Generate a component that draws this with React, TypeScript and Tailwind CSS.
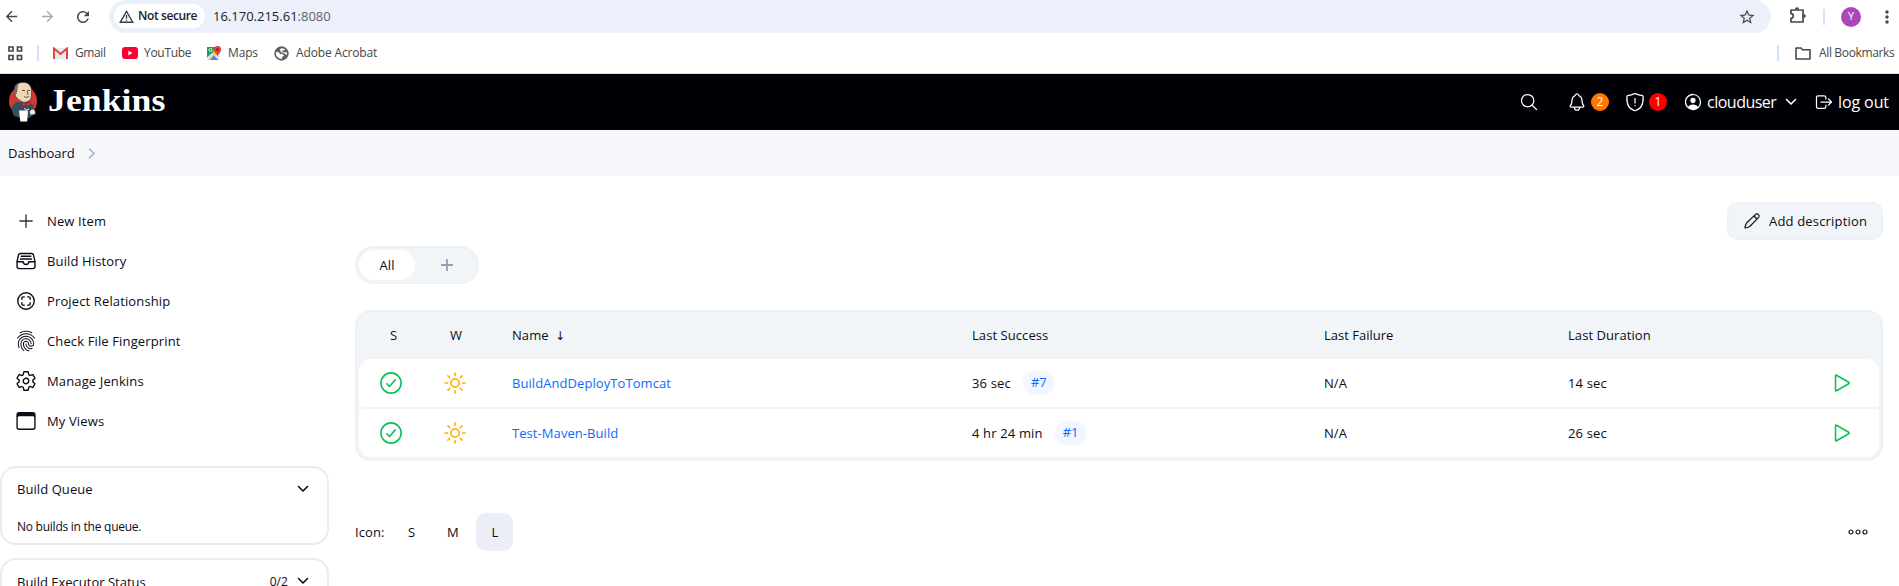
import React from "react";
import { IoFileTrayFullOutline, IoScanCircleOutline, IoFingerPrintOutline, IoSettingsOutline, IoBrowsersOutline, IoSearchOutline, IoNotificationsOutline, IoPersonCircleOutline, IoLogOutOutline, IoAdd } from "react-icons/io5";
import { MdArrowBack, MdArrowForward, MdRefresh, MdStarBorder, MdMoreVert } from "react-icons/md";

function Jenkins() {
  return (
    <svg width="30" height="42" viewBox="0 0 30 42">
      <ellipse cx="15" cy="20" rx="14" ry="15" fill="#d33833" />
      <path d="M7 22 3 27l3 8 7 2h8l6-4-2-9-5-3H9z" fill="#335061" />
      <path d="M7 13C6 5 10 1 15 1.500c6-.5 9 4 8.500 10 0 6-1 8-4 9-3 1.500-5 1-7.500-1-3-2-4.500-3-5-6.500z" fill="#f0d6b7" stroke="#4a403a" strokeWidth=".8" />
      <path d="M6.500 13C5.500 6 7 3 11 2c-1.500 3-1.500 5-1.500 7l-1 4z" fill="#6d6b6d" />
      <path d="M14 9.500h3m2.500 0H22M16 15.500c2 1.500 4 1 5-.5M19 10l1 3-1 .5" stroke="#4a403a" strokeWidth=".9" fill="none" />
      <path d="M14 21l4 2 4-2.500v5l-4-1.500-3.500 2z" fill="#d33833" stroke="#801c1c" strokeWidth=".5" />
      <path d="M16 27l2 2 3-1" stroke="#dfe6ea" strokeWidth="1" fill="none" />
      <path d="M11 29.500h9l-.8 11h-6.900z" fill="#fff" />
      <path d="M21.500 31c1-3 4-4 5.500-1l.5 3-5 1z" fill="#f5e9db" stroke="#4a403a" strokeWidth=".4" />
    </svg>
  );
}

function Gmail() {
  return (
    <svg width="15" height="12" viewBox="0 0 15 12">
      <path d="M1 1h13v11H1z" fill="#e8eaed" />
      <path d="M1 12V1.500L7.500 7 14 1.500V12" fill="none" stroke="#e0463b" strokeWidth="2" />
    </svg>
  );
}

function MapsIcon() {
  return (
    <svg width="15" height="15" viewBox="0 0 15 15">
      <path d="M0 1h13v13H0z" fill="#e5e7e8" />
      <path d="M0 1h9L5 8 0 12z" fill="#1f9d58" />
      <path d="M0 14 10 3l3 1-9 10z" fill="#fbc934" />
      <path d="M3 14l4-4.500L11.500 14z" fill="#4286f5" />
      <path d="M0 11.500 5 7l1.500 1.500L1 14H0z" fill="#d6e5fb" />
      <circle cx="3.500" cy="4" r="1.500" fill="none" stroke="#fff" strokeWidth=".8" />
      <path d="M10.500 0a3.700 3.700 0 0 1 3.700 3.700c0 2.500-2.700 3.800-3.700 6.800-1-3-3.700-4.300-3.700-6.800A3.700 3.700 0 0 1 10.500 0z" fill="#e2453a" />
      <circle cx="10.500" cy="3.600" r="1.300" fill="#8c2119" />
    </svg>
  );
}

function Globe() {
  return (
    <svg width="15" height="15" viewBox="0 0 15 15">
      <circle cx="7.500" cy="7.500" r="7.200" fill="#5f6368" />
      <path d="M2 6h2.500l1.500 2 3 .3 1 1.500-2 1.200v2C4.500 13 2.200 10.500 1.900 7.800zM7 2.200l3 .5 1.500 1.300-2.500.3-1.200 1.200 1.700.8 3.500.2c.2.800.1 1.700-.1 2.500L10.500 7.600 7 6.300 6 4z" fill="#fff" />
    </svg>
  );
}

function Puzzle() {
  return (
    <svg width="18" height="18" viewBox="0 0 18 18" fill="none" stroke="#474747" strokeWidth="1.700" strokeLinejoin="round">
      <path d="M2 4h12v12H2v-3.700a2.300 2.300 0 0 0 0-4.600z" />
      <path d="M6 3.500a2 2.300 0 0 1 4 0zM14.500 8a2.300 2 0 0 1 0 4z" fill="#474747" stroke="none" />
    </svg>
  );
}

function Folder() {
  return (
    <svg width="16" height="13" viewBox="0 0 16 13" fill="none" stroke="#474747" strokeWidth="1.600" strokeLinejoin="round">
      <path d="M1 1h5l1.600 1.800H15V12H1z" />
    </svg>
  );
}

function Shield() {
  return (
    <svg width="20" height="20" viewBox="0 0 512 512" fill="none" stroke="currentColor" strokeWidth="32" strokeLinecap="round" strokeLinejoin="round">
      <path d="M463 113c0-9-6-17-15-18-94-16-121-25-183-52-6-3-12-3-18 0-62 27-89 36-183 52-9 1-15 9-15 18-6 102 9 190 46 255 39 69 94 93 161 112 67-19 122-43 161-112 37-65 52-153 46-255z" />
      <path d="M256 160v120M256 345v4" />
    </svg>
  );
}

function Sun() {
  return (
    <svg width="22" height="22" viewBox="0 0 22 22" fill="none" stroke="#ffb21a" strokeWidth="1.700" strokeLinecap="round">
      <circle cx="11" cy="11" r="4.200" />
      <path d="M11 1v2.500M11 18.500V21M1 11h2.500M18.500 11H21M3.930 3.930l1.770 1.770M16.300 16.300l1.770 1.770M3.930 18.070l1.770-1.770M16.300 5.700l1.770-1.770" />
    </svg>
  );
}

function Check() {
  return (
    <svg width="22" height="22" viewBox="0 0 22 22" fill="none" stroke="#0cc155" strokeWidth="1.600" strokeLinecap="round" strokeLinejoin="round">
      <circle cx="11" cy="11" r="10.100" />
      <path d="M6.800 11.800l2.600 2.700 5.800-6.600" />
    </svg>
  );
}

function Play() {
  return (
    <svg width="17" height="18" viewBox="0 0 17 18" className="ml-[35px]" fill="none" stroke="#0cc155" strokeWidth="1.600" strokeLinejoin="round">
      <path d="M1.500 1.900v14.200c0 .6.500 1 1 .7l12.200-7c.6-.3.600-1.100 0-1.500L2.500 1.200c-.5-.3-1 .1-1 .7z" />
    </svg>
  );
}

function Chevron({ className = "" }: { className?: string }) {
  return (
    <svg width="12" height="8" viewBox="0 0 12 8" className={className} fill="none" stroke="currentColor" strokeWidth="1.600" strokeLinecap="round" strokeLinejoin="round">
      <path d="M1.500 1.500 6 6l4.500-4.500" />
    </svg>
  );
}

function Pencil() {
  return (
    <svg width="16" height="16" viewBox="0 0 16 16" fill="none" stroke="#14141f" strokeWidth="1.200" strokeLinejoin="round">
      <path d="M1 15c0-2 .5-3.800 1.800-5.200L11.300 1.600a1.900 1.900 0 0 1 3.100 0 1.900 1.900 0 0 1 0 3L6.200 13C4.800 14.300 3 15 1 15z M10.600 2.500c0 1.700 1.100 2.900 2.900 2.900" />
    </svg>
  );
}

function Warning() {
  return (
    <svg width="15" height="13" viewBox="0 0 15 13" fill="none" stroke="#3c4043" strokeWidth="1.400">
      <path d="M1.300 12.200 7.500 1.400l6.200 10.800z M7.500 5v3.700M7.500 9.700v1.300" />
    </svg>
  );
}

const nav = [
  { label: "New Item", icon: <IoAdd size={22} className="text-[#333340]" /> },
  { label: "Build History", icon: <IoFileTrayFullOutline size={22} /> },
  { label: "Project Relationship", icon: <IoScanCircleOutline size={22} /> },
  { label: "Check File Fingerprint", icon: <IoFingerPrintOutline size={22} /> },
  { label: "Manage Jenkins", icon: <IoSettingsOutline size={22} /> },
  { label: "My Views", icon: <IoBrowsersOutline size={22} /> },
];

const jobs = [
  { name: "BuildAndDeployToTomcat", ago: "36 sec", build: "#7", dur: "14 sec", r: "rounded-t-[12px] rounded-b-[4px]" },
  { name: "Test-Maven-Build", ago: "4 hr 24 min", build: "#1", dur: "26 sec", r: "rounded-t-[4px] rounded-b-[12px]" },
];

const cols = "grid grid-cols-[64px_89px_460px_352px_244px_1fr_80px] items-center";

export default function App() {
  return (
    <div className="h-[586px] w-[1899px] overflow-hidden bg-white font-['Open_Sans','Noto_Sans',sans-serif] text-[13px] tracking-[0.07px] text-[#0c0c16]">
      <div className="flex h-[33px] items-center">
        <div className="flex w-[109px] items-center pl-[3px] text-[#474747]">
          <MdArrowBack size={17} className="mr-[19px]" />
          <MdArrowForward size={17} className="mr-[18px] text-[#a8a8a8]" />
          <MdRefresh size={18} />
        </div>
        <div className="flex h-[33px] w-[1662px] items-center rounded-full bg-[#ecf0fa] pl-[5px]">
          <div className="-mt-px flex h-6 w-[91px] items-center gap-[4px] rounded-full bg-white pl-[5px]">
            <Warning />
            <span className="whitespace-nowrap text-[12px] font-semibold tracking-[-0.4px] text-[#202124]">Not secure</span>
          </div>
          <span className="ml-[8px] text-[13px] tracking-[0px] text-[#202124]">16.170.215.61<span className="text-[#5f6368]">:8080</span></span>
          <MdStarBorder size={18} className="mr-[15px] ml-auto text-[#474747]" />
        </div>
        <div className="-mt-[3px] ml-[18px]"><Puzzle /></div>
        <div className="ml-[16px] h-4 w-[2px] bg-[#d3e3fd]" />
        <div className="ml-[16px] flex size-5 items-center justify-center rounded-full bg-[#ab47bc] text-[11px] text-white">Y</div>
        <MdMoreVert size={20} className="ml-[16px] shrink-0 text-[#474747]" />
      </div>
      <div className="flex h-[41px] items-center border-b border-[#dcdcdc] text-[12px] tracking-[-0.15px] text-[#474747]">
        <svg width="15" height="15" viewBox="0 0 15 15" className="ml-[8px]" fill="none" stroke="#474747" strokeWidth="1.700"><path d="M1 1h4v4H1zM9.500 1h4v4h-4zM1 9.500h4v4H1zM9.500 9.500h4v4h-4z" /></svg>
        <div className="ml-[14px] h-4 w-[2px] bg-[#d3e3fd]" />
        <div className="ml-[14px] flex w-[69px] items-center gap-[7px]"><Gmail /><span className="tracking-[-0.4px]">Gmail</span></div>
        <div className="flex w-[85px] items-center gap-[6px]">
          <svg width="16" height="12" viewBox="0 0 16 12"><rect width="16" height="12" rx="3" fill="#ff0033" /><path d="M6.300 3.500v5L10.500 6z" fill="#fff" /></svg>
          <span className="tracking-[-0.3px]">YouTube</span>
        </div>
        <div className="flex w-[67px] items-center gap-[6px]"><MapsIcon /><span>Maps</span></div>
        <div className="flex items-center gap-[7px]"><Globe /><span className="whitespace-nowrap">Adobe Acrobat</span></div>
        <div className="ml-auto h-4 w-[2px] bg-[#d3e3fd]" />
        <div className="ml-[16px] flex w-[104px] items-center gap-[8px]"><Folder /><span className="whitespace-nowrap tracking-[-0.35px]">All Bookmarks</span></div>
      </div>
      <header className="flex h-[56px] items-center bg-[#000007] text-white">
        <div className="ml-[8px] flex items-center gap-[10px]">
          <Jenkins />
          <span className="-mt-[4px] origin-left scale-x-115 font-['Liberation_Serif',serif] text-[31px] leading-none font-bold">Jenkins</span>
        </div>
        <div className="ml-auto flex items-center text-[16px]">
          <IoSearchOutline size={20} />
          <div className="ml-[28px] flex items-center gap-[4px]"><IoNotificationsOutline size={20} /><span className="flex size-[18px] items-center justify-center rounded-full bg-[#ff7700] text-[12px]">2</span></div>
          <div className="ml-[16px] flex items-center gap-[4px]"><Shield /><span className="flex size-[18px] items-center justify-center rounded-full bg-[#ff0000] text-[12px]">1</span></div>
          <IoPersonCircleOutline size={20} className="ml-[16px]" />
          <span className="ml-[4px] w-[69px] whitespace-nowrap tracking-[-0.5px]">clouduser</span>
          <Chevron className="ml-[9px]" />
          <IoLogOutOutline size={20} className="ml-[17px]" />
          <span className="ml-[4px] w-[61px] whitespace-nowrap tracking-[-0.1px]">log out</span>
        </div>
      </header>
      <nav className="flex h-[46px] items-center bg-[#f5f7fa] pl-[8px]">
        <span className="mt-px w-[80px] tracking-[-0.05px]">Dashboard</span>
        <svg width="7" height="11" viewBox="0 0 7 11" fill="none" stroke="#9db0d3" strokeWidth="1.500"><path d="M1 .7l5 4.800-5 4.800" /></svg>
      </nav>
      <div className="flex">
        <aside className="w-[329px] pt-[25px]">
          <div className="mb-[25px]">
            {nav.map((n) => (
              <div key={n.label} className="flex h-10 items-center">
                <div className="ml-[14px] flex w-6 justify-center">{n.icon}</div>
                <span className="mt-px ml-[9px] tracking-[0.13px]">{n.label}</span>
              </div>
            ))}
          </div>
          <section className="h-[79px] rounded-[16px] border-2 border-[#e8ecf3] pl-[15px]">
            <div className="flex h-[43px] items-center justify-between pr-[18px]"><span>Build Queue</span><Chevron className="-mt-[2px]" /></div>
            <div className="pt-[7px] text-[12px] leading-[18px] tracking-[-0.25px]">No builds in the queue.</div>
          </section>
          <section className="mt-[13px] h-[79px] rounded-[16px] border-2 border-[#e8ecf3] pl-[15px]">
            <div className="flex h-[43px] items-center pr-[18px]"><span className="mt-[2px] tracking-[0px]">Build Executor Status</span><span className="mt-px mr-[9px] ml-auto text-[12px]">0/2</span><Chevron className="-mt-[2px]" /></div>
          </section>
        </aside>
        <main className="ml-[26px] w-[1528px] pt-[26px]">
          <div className="flex justify-end">
            <button className="flex h-[38px] w-[156px] items-center gap-[9px] rounded-[10px] border-2 border-[#eef2f7] bg-[#f1f5f9] pl-[15px] tracking-[0.18px] whitespace-nowrap"><Pencil /><span className="mt-px">Add description</span></button>
          </div>
          <div className="mt-[6px] flex h-[38px] w-[124px] items-center rounded-full border-2 border-[#edf1f5] bg-[#f1f5f8] pl-[2px]">
            <div className="flex h-[30px] w-[56px] items-center justify-center rounded-full bg-white pt-px">All</div>
            <svg width="12" height="12" className="ml-[26px]" stroke="#949fb0" strokeWidth="1.800"><path d="M6 0v12M0 6h12" /></svg>
          </div>
          <div className="mt-[26px] h-[151px] rounded-[16px] border-2 border-[#edf1f5] bg-[#f1f5f8] px-[2px]">
            <div className={cols + " h-[47px]"}>
              <span className="pl-[31px]">S</span><span className="pl-[27px]">W</span><span>Name <span className="ml-[3px] font-['DejaVu_Sans',sans-serif] text-[12px]">↓</span></span><span>Last Success</span><span className="tracking-[0px]">Last Failure</span><span>Last Duration</span>
            </div>
            {jobs.map((j) => (
              <div key={j.name} className={cols + " mb-[2px] h-12 bg-white " + j.r}>
                <span className="pl-[21px]"><Check /></span><span className="pl-[21px]"><Sun /></span>
                <span className="mt-px text-[#0b6aff]">{j.name}</span>
                <span className="flex items-center"><span className="mt-px tracking-[0.15px]">{j.ago}</span><span className="ml-[12px] flex h-6 w-8 items-center justify-center rounded-full bg-[#f1f6ff] text-[#0b6aff]">{j.build}</span></span>
                <span className="mt-px">N/A</span><span className="mt-px tracking-[0.15px]">{j.dur}</span>
                <Play />
              </div>
            ))}
          </div>
          <div className="mt-[52px] flex h-[38px] items-center">
            <span className="mt-px w-[53px]">Icon:</span><span className="mt-px w-[39px]">S</span><span className="mt-px w-[29px]">M</span>
            <span className="flex h-[38px] w-[37px] items-center justify-center rounded-[10px] bg-[#ebeef6] pt-px pl-px">L</span>
            <svg width="20" height="6" className="mr-[15px] ml-auto" fill="none" stroke="#14141f" strokeWidth="1.200"><circle cx="3" cy="3" r="2" /><circle cx="10" cy="3" r="2" /><circle cx="17" cy="3" r="2" /></svg>
          </div>
        </main>
      </div>
    </div>
  );
}
